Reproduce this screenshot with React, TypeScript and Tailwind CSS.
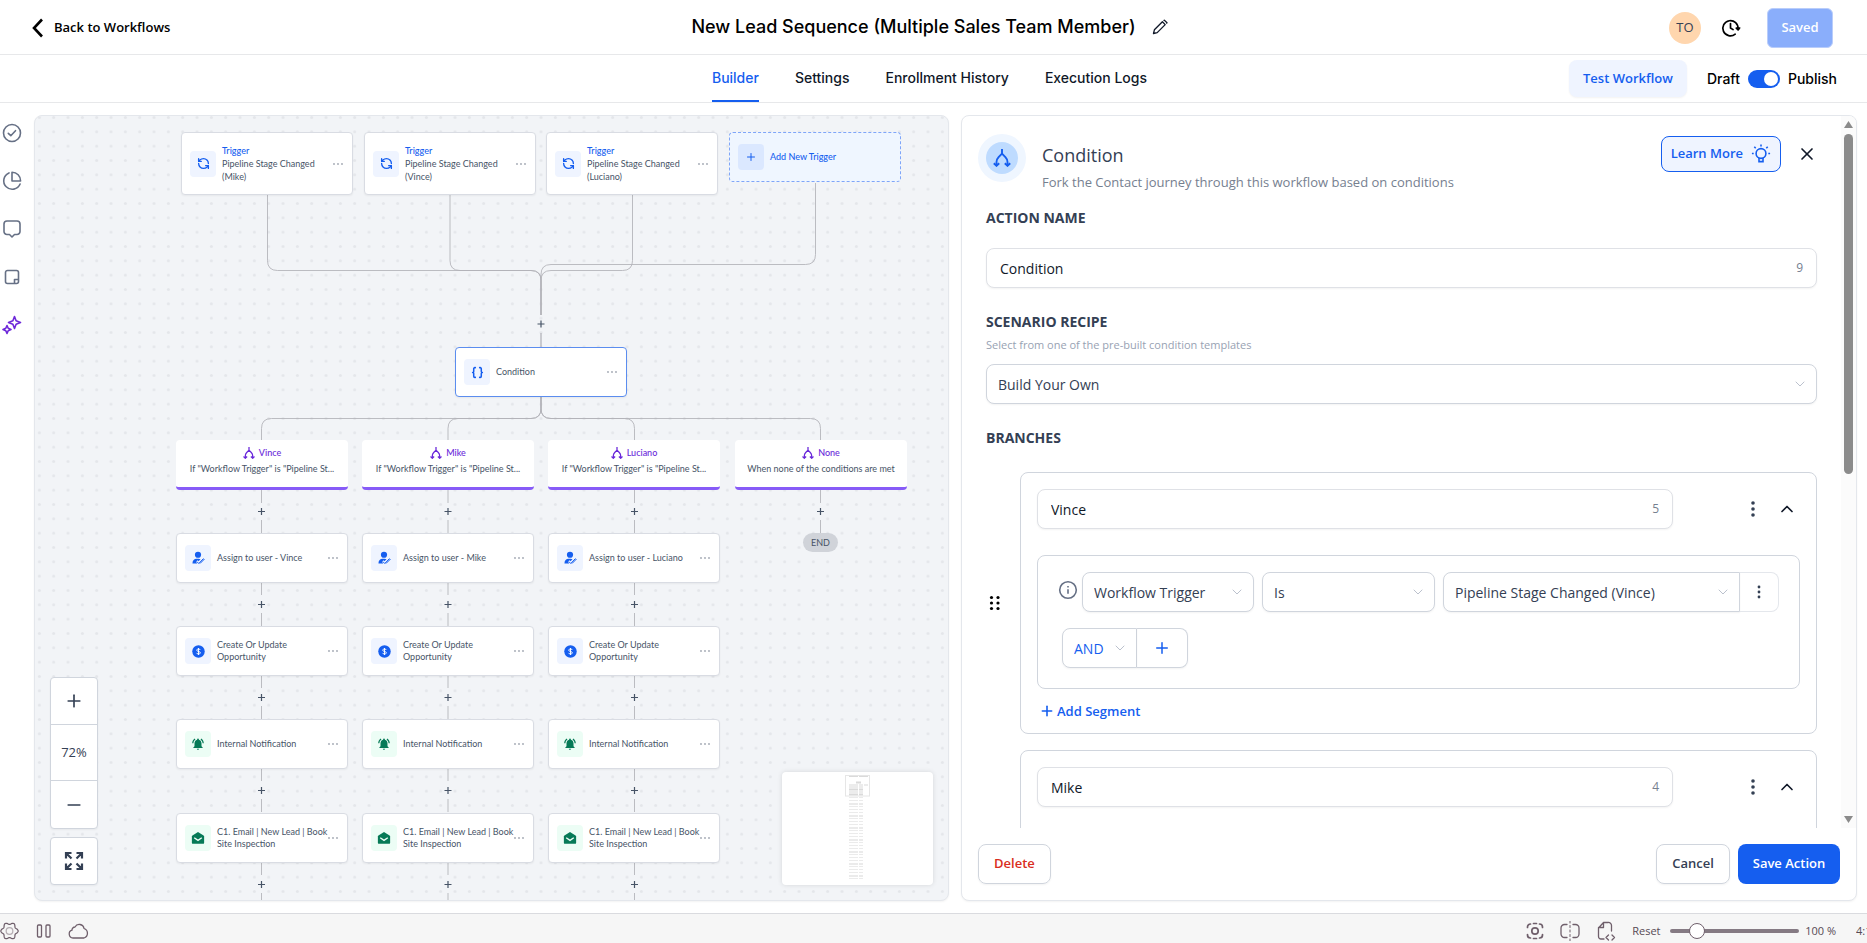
import { useState, type ReactNode } from "react";
import { Braces, ChevronDown, ChevronUp, Plus, Minus, RefreshCcw, X } from "lucide-react";
import { MdNotificationsActive } from "react-icons/md";

const UI = "font-['Open_Sans','Noto_Sans',sans-serif]";
const INTER = "font-['Inter','Open_Sans',sans-serif]";
const NODE = "font-['Lato','Open_Sans',sans-serif] text-[9px]";

/* ---------- icons ---------- */

function ForkIcon({ size, className = "" }: { size: number; className?: string }) {
  return (
    <svg width={size} height={size} viewBox="0 0 18 18" fill="none" stroke="currentColor" strokeWidth="1.9" className={className} aria-hidden="true">
      <path d="M9 0v5M9 4.6 5.6 8.2C4.1 9.8 3.5 11.2 3.5 13v4M9 4.6l3.4 3.6c1.5 1.6 2.1 3 2.1 4.8v4" />
      <path d="M.8 14.2l2.7 2.6 2.7-2.6M11.8 14.2l2.7 2.6 2.7-2.6" />
    </svg>
  );
}

function PencilIcon() {
  return (
    <svg width="16" height="16" viewBox="0 0 16 16" fill="none" stroke="currentColor" strokeWidth="1.3" strokeLinejoin="round" aria-hidden="true">
      <path d="M1.5 14.5l.9-3.700 8-8 2.8 2.8-8 8zM11.6 1.8l.7-.7 2.7 2.7-.7.7" />
    </svg>
  );
}

function HistoryIcon() {
  return (
    <svg width="20" height="20" viewBox="0 0 20 20" fill="none" stroke="currentColor" strokeWidth="1.7" strokeLinecap="round" strokeLinejoin="round" aria-hidden="true">
      <path d="M14.2 16.2A7.6 7.6 0 1 1 17 11" />
      <path d="M9.5 5.5V10l2.6 1.6" />
      <path d="M15.3 10.2l1.8 1.7 1.5-1.9z" fill="currentColor" />
    </svg>
  );
}

function BulbIcon() {
  return (
    <svg width="20" height="20" viewBox="0 0 20 20" fill="none" stroke="currentColor" strokeWidth="1.6" aria-hidden="true">
      <circle cx="10" cy="9.5" r="4.9" />
      <path d="M8 14v3.6h4V14" />
      <path d="M10 .6v1.9M.9 9.5h1.8M17.3 9.5h1.8M3.3 2.8l1.4 1.4M16.7 2.8l-1.4 1.4" />
    </svg>
  );
}

function AssignIcon() {
  return (
    <svg width="13" height="14" viewBox="0 0 26 28" fill="currentColor" className="text-[#155eef]" aria-hidden="true">
      <circle cx="12" cy="7.5" r="6.2" />
      <path d="M1 24c0-5 3.5-8.5 8-8.5h4c1.5 0 3 .4 4 1l-4 4-2-2-3 3 2.5 3.5H1z" />
      <path d="M9.5 21l4 4 9.5-10M16 25l9-9" fill="none" stroke="currentColor" strokeWidth="2" />
    </svg>
  );
}

function DollarIcon() {
  return (
    <svg width="13" height="13" viewBox="0 0 26 26" aria-hidden="true">
      <circle cx="13" cy="13" r="12.5" fill="#155eef" />
      <path d="M16.500 10C16.200 8.600 14.900 8 13 8c-2 0-3.500.9-3.500 2.500 0 3.600 7.200 1.500 7.200 5 0 1.600-1.600 2.500-3.700 2.500-2 0-3.500-.7-3.800-2.200M13 6v14" fill="none" stroke="#fff" strokeWidth="1.9" />
    </svg>
  );
}

function MailIcon() {
  return (
    <svg width="14" height="14" viewBox="0 0 24 24" fill="#067a57" aria-hidden="true">
      <path d="M12 1.5 21.5 7.5Q22.5 8.2 22.5 9.5V20a2 2 0 0 1-2 2h-17a2 2 0 0 1-2-2V9.5Q1.5 8.2 2.5 7.5z" />
      <path d="M5.5 11.5 12 16l6.5-4.5" fill="none" stroke="#ecfdf5" strokeWidth="2.4" />
    </svg>
  );
}

function ExpandIcon() {
  return (
    <svg width="20" height="20" viewBox="0 0 20 20" fill="none" stroke="currentColor" strokeWidth="2.2" aria-hidden="true">
      <path d="M2 7.5V2h5.5M2 2l5.5 5.5M12.5 2H18v5.5M18 2l-5.5 5.5M2 12.5V18h5.5M2 18l5.5-5.5M18 12.5V18h-5.5M18 18l-5.5-5.5" />
    </svg>
  );
}

function Dots({ vertical = false, size, gap, r, color }: { vertical?: boolean; size: number; gap: number; r: number; color: string }) {
  const mid = size / 2;
  return (
    <svg width={size} height={size} viewBox={`0 0 ${size} ${size}`} fill={color} aria-hidden="true">
      {[-1, 0, 1].map((i) => (
        <circle key={i} cx={vertical ? mid : mid + i * gap} cy={vertical ? mid + i * gap : mid} r={r} />
      ))}
    </svg>
  );
}

/* ---------- header ---------- */

function Header() {
  return (
    <header className="grid h-[55px] shrink-0 grid-cols-[1fr_auto_1fr] items-center border-b border-[#e7e8ea] pt-[2px] pr-[34px] pl-7">
      <a href="#workflows" className={`${UI} flex items-center gap-2 text-[13px] font-semibold text-black`}>
        <svg width="18" height="20" viewBox="0 0 18 20" fill="none" stroke="currentColor" strokeWidth="2.6" aria-hidden="true">
          <path d="M14 1.5 6 10l8 8.5" />
        </svg>
        Back to Workflows
      </a>
      <div className="flex items-center gap-4 pr-[2px] pb-[3px]">
        <h1 className={`${INTER} text-[18px] font-medium text-black`}>New Lead Sequence (Multiple Sales Team Member)</h1>
        <button aria-label="Rename workflow" className="text-[#101828]">
          <PencilIcon />
        </button>
      </div>
      <div className="flex items-center justify-end">
        <span className={`${UI} flex size-8 items-center justify-center rounded-full bg-[#ffd6ae] text-[13px] text-[#344054]`}>TO</span>
        <button aria-label="Version history" className="ml-5 text-black">
          <HistoryIcon />
        </button>
        <button disabled className={`${UI} ml-[26px] h-10 w-[66px] rounded-md border border-[#b9cdfb] bg-[#8aaefb] text-[13px] font-semibold text-white`}>
          Saved
        </button>
      </div>
    </header>
  );
}

const tabs = ["Builder", "Settings", "Enrollment History", "Execution Logs"];

function TabBar() {
  const [active, setActive] = useState(tabs[0]);
  const [published, setPublished] = useState(true);
  return (
    <div className={`${INTER} grid h-12 shrink-0 grid-cols-[1fr_auto_1fr] items-center border-b border-[#e7e8ea] pr-[30px] pl-6 text-[14px] font-medium`}>
      <span />
      <nav className="flex h-full gap-9 pr-[2px]">
        {tabs.map((t) => (
          <button
            key={t}
            onClick={() => setActive(t)}
            className={`h-full border-b-2 ${t === active ? "border-[#155eef] text-[#155eef]" : "border-transparent text-[#101828]"}`}
          >
            {t}
          </button>
        ))}
      </nav>
      <div className="flex items-center justify-end">
        <button className={`${UI} h-[37px] w-[118px] rounded-lg bg-[#eff4ff] text-[13px] font-semibold text-[#155eef] shadow-xs`}>Test Workflow</button>
        <label className="ml-5 flex items-center gap-2 text-black">
          Draft
          <input type="checkbox" role="switch" checked={published} onChange={() => setPublished(!published)} className="peer sr-only" />
          <span className={`flex h-[18px] w-8 items-center rounded-full px-[2px] ${published ? "justify-end bg-[#155eef]" : "justify-start bg-gray-300"}`}>
            <span className="size-[14px] rounded-full bg-white" />
          </span>
          Publish
        </label>
      </div>
    </div>
  );
}

/* ---------- left rail ---------- */

function Rail() {
  const base = { width: 20, height: 20, viewBox: "0 0 20 20", fill: "none", stroke: "currentColor", strokeWidth: 1.6, strokeLinecap: "round" as const, strokeLinejoin: "round" as const };
  const items: { label: string; color: string; icon: ReactNode }[] = [
    { label: "Checklist", color: "text-[#667085]", icon: <svg {...base}><circle cx="10" cy="10" r="8.5" /><path d="M6.3 10.3l2.5 2.4 4.7-5" /></svg> },
    { label: "Statistics", color: "text-[#667085]", icon: <svg {...base}><path d="M7 1.9A8.5 8.5 0 1 0 18.100 13" /><path d="M10 1.2V10h8.6A8.6 8.6 0 0 0 10 1.2z" /></svg> },
    { label: "Comments", color: "text-[#667085]", icon: <svg {...base}><path d="M5 2h10a3 3 0 0 1 3 3v7.5a3 3 0 0 1-3 3h-2.5L10 18l-2.5-2.5H5a3 3 0 0 1-3-3V5a3 3 0 0 1 3-3z" /></svg> },
    { label: "Notes", color: "text-[#667085]", icon: <svg {...base}><path d="M5.5 3.5h9a2 2 0 0 1 2 2v9a2 2 0 0 1-2 2h-9a2 2 0 0 1-2-2v-9a2 2 0 0 1 2-2zM12.5 16.3v-3.8h4" /></svg> },
    { label: "AI assistant", color: "text-[#6d28d9]", icon: <svg {...base}><path d="M12.5 1.5l1.6 4.3 4.4 1.7-4.4 1.7-1.6 4.3-1.6-4.3-4.4-1.7 4.4-1.7zM5 10.5l1.2 2.8L9 14.5l-2.8 1.2L5 18.5l-1.2-2.8L1 14.5l2.8-1.2z" /></svg> },
  ];
  return (
    <nav aria-label="Tools" className="flex w-[34px] shrink-0 flex-col gap-7 pt-2 pl-[2px]">
      {items.map((i) => (
        <button key={i.label} aria-label={i.label} className={`size-5 ${i.color}`}>
          {i.icon}
        </button>
      ))}
    </nav>
  );
}

/* ---------- canvas ---------- */

const stemX = 506;
const triggers = [
  { x: 146, name: "(Mike)" },
  { x: 329, name: "(Vince)" },
  { x: 511, name: "(Luciano)" },
];
const branches = [
  { x: 141, center: 226.5, name: "Vince", text: 'If "Workflow Trigger" is "Pipeline St...' },
  { x: 327, center: 413, name: "Mike", text: 'If "Workflow Trigger" is "Pipeline St...' },
  { x: 513, center: 599.5, name: "Luciano", text: 'If "Workflow Trigger" is "Pipeline St...' },
  { x: 700, center: 785.5, name: "None", text: "When none of the conditions are met" },
];
const rows = [417, 510, 603, 697];

function Connectors() {
  const feeds = [232.5, 415, 597.5];
  return (
    <svg className="pointer-events-none absolute inset-0 h-full w-full" aria-hidden="true">
      <defs>
        <pattern id="grid-dots" x="-2.8" y="-5.7" width="14.333" height="14.333" patternUnits="userSpaceOnUse">
          <circle cx="7.17" cy="7.17" r="1.5" fill="#e4e6ea" />
        </pattern>
      </defs>
      <rect width="100%" height="100%" fill="url(#grid-dots)" />
      <g fill="none" stroke="#b1b1b7" strokeWidth="1" strokeOpacity="0.85">
        {feeds.map((x) => {
          const d = x < stemX ? -10 : 10;
          return <path key={x} d={`M${x} 79V144.500Q${x} 154.500 ${x - d} 154.500H${stemX + d}Q${stemX} 154.500 ${stemX} 164.500V199`} />;
        })}
        <path d={`M780.500 67V138.500Q780.500 148.500 770.500 148.500H${stemX + 10}Q${stemX} 148.500 ${stemX} 158.500V199`} />
        <path d={`M${stemX} 217V231`} strokeWidth="1.5" />
        {branches.map(({ center: x }) => {
          const d = x < stemX ? -10 : 10;
          return <path key={x} d={`M${stemX} 281V292.500Q${stemX} 302.500 ${stemX + d} 302.500H${x - d}Q${x} 302.500 ${x} 312.500V324`} />;
        })}
        {branches.map(({ center: x, name }) => (
          <g key={name}>
            <path d={`M${x} 374V387M${x} 404V417`} />
            {name !== "None" && rows.map((y) => <path key={y} d={`M${x} ${y + 50}V${y + 62}M${x} ${y + 80}V${y + 93}`} />)}
          </g>
        ))}
      </g>
      <g stroke="#475467" strokeWidth="1.2">
        <path d={`M${stemX - 3.5} 208h7M${stemX} 204.500v7`} />
        {branches.map(({ center: x, name }) => (
          <g key={name}>
            <path d={`M${x - 3.5} 395.500h7M${x} 392v7`} />
            {name !== "None" && rows.map((y) => <path key={y} d={`M${x - 3.5} ${y + 71.5}h7M${x} ${y + 68}v7`} />)}
          </g>
        ))}
      </g>
    </svg>
  );
}

function NodeCard({ x, y, icon, green = false, selected = false, tall = false, children }: { x: number; y: number; icon: ReactNode; green?: boolean; selected?: boolean; tall?: boolean; children: ReactNode }) {
  return (
    <div
      style={{ left: x, top: y }}
      className={`absolute flex w-[172px] items-center rounded border bg-white pr-2 pl-2 ${NODE} text-[#475467] shadow-xs ${tall ? "h-[63px] leading-[13px]" : "h-[50px] leading-[12px]"} ${selected ? "border-[#5b8def]" : "border-[#d9dce3]"}`}
    >
      <span className={`flex size-[26px] shrink-0 items-center justify-center rounded ${green ? "bg-[#ecfdf5]" : "bg-[#eff4ff]"}`}>{icon}</span>
      <div className="ml-[6px] min-w-0 flex-1 whitespace-nowrap">{children}</div>
      <button aria-label="Node options" className="shrink-0">
        <Dots size={12} gap={4} r={0.9} color="#a0a6b1" />
      </button>
    </div>
  );
}

function Minimap() {
  return (
    <div className="absolute right-[15px] bottom-[15px] h-[113px] w-[151px] rounded bg-white shadow-[0_0_5px_rgba(0,0,0,0.12)]">
      <svg width="151" height="113" viewBox="0 0 151 113" role="img" aria-label="Minimap">
        <path d="M67 4h9v1h-9zM77 4h9v1h-9zM74 9.5h5v2h-5zM67 12.5h9v1h-9zM77 12.5h4v1h-4zM82 12.5h4v1h-4zM67 14.5h9v1h-9zM77 14.5h4v1h-4zM67 16.5h9v2h-9zM77 16.5h4v2h-4zM67 19.5h9v1h-9zM77 19.5h4v1h-4zM67 21.5h9v2h-9zM77 21.5h4v2h-4z" fill="#dadada" />
        {Array.from({ length: 28 }, (_, i) => {
          const y = 25 + i * 3;
          const h = i % 4 === 2 ? 2 : 1;
          return <path key={i} d={`M67 ${y}h9v${h}h-9zM77 ${y}h4v${h}h-4z`} fill="#ebebeb" />;
        })}
        <rect x="63.5" y="3.5" width="24" height="20.5" fill="none" stroke="#e6e6e6" />
      </svg>
    </div>
  );
}

function Canvas() {
  return (
    <section aria-label="Workflow canvas" className={`${UI} relative min-w-0 flex-[915] overflow-hidden rounded-lg border border-[#e4e7ec] bg-[#f2f4f7] shadow-xs`}>
      <Connectors />
      {triggers.map((t) => (
        <NodeCard key={t.x} x={t.x} y={16} tall icon={<RefreshCcw size={13} strokeWidth={2.5} className="text-[#155eef]" />}>
          <div className="font-medium text-[#155eef]">Trigger</div>
          <div>Pipeline Stage Changed</div>
          <div>{t.name}</div>
        </NodeCard>
      ))}
      <button style={{ left: 694, top: 16 }} className={`absolute flex h-[50px] w-[172px] items-center rounded border border-dashed border-[#7fa5f8] bg-[#eff6ff] pl-2 ${NODE} font-medium text-[#155eef]`}>
        <span className="flex size-[26px] items-center justify-center rounded bg-[#dbe8ff]">
          <Plus size={12} />
        </span>
        <span className="ml-[6px]">Add New Trigger</span>
      </button>
      <NodeCard x={420} y={231} selected icon={<Braces size={13} strokeWidth={2.8} className="text-[#155eef]" />}>
        Condition
      </NodeCard>
      {branches.map((b) => (
        <div key={b.name} style={{ left: b.x, top: 324 }} className={`absolute flex h-[50px] w-[172px] flex-col items-center rounded border-b-[3px] border-[#875bf7] bg-white pt-[6px] ${NODE} text-[#475467]`}>
          <div className="flex items-center gap-1 leading-[14px] font-medium text-[#6927da]">
            <ForkIcon size={12} />
            {b.name}
          </div>
          <div className="leading-[18px] whitespace-nowrap">{b.text}</div>
        </div>
      ))}
      {branches.slice(0, 3).map((b) => (
        <div key={b.name} className="contents">
          <NodeCard x={b.x} y={rows[0]} icon={<AssignIcon />}>Assign to user - {b.name}</NodeCard>
          <NodeCard x={b.x} y={rows[1]} icon={<DollarIcon />}>
            Create Or Update
            <br />
            Opportunity
          </NodeCard>
          <NodeCard x={b.x} y={rows[2]} green icon={<MdNotificationsActive size={14} className="text-[#067a57]" />}>Internal Notification</NodeCard>
          <NodeCard x={b.x} y={rows[3]} green icon={<MailIcon />}>
            C1. Email | New Lead | Book
            <br />
            Site Inspection
          </NodeCard>
        </div>
      ))}
      <span style={{ left: 768, top: 417 }} className={`absolute flex h-[19px] w-[35px] items-center justify-center rounded-full bg-[#d0d3d9] ${NODE} text-[#475467]`}>END</span>
      <div className="absolute bottom-[15px] left-[15px] flex w-12 flex-col gap-2 text-[#344054]">
        <div className="flex flex-col divide-y divide-[#d0d5dd] rounded border border-[#d0d5dd] bg-white shadow-xs">
          <button aria-label="Zoom in" className="flex h-[47px] items-center justify-center">
            <Plus size={20} />
          </button>
          <span className="flex h-14 items-center justify-center text-[13px]">72%</span>
          <button aria-label="Zoom out" className="flex h-[47px] items-center justify-center">
            <Minus size={20} />
          </button>
        </div>
        <button aria-label="Fit to screen" className="flex h-12 items-center justify-center rounded border border-[#d0d5dd] bg-white shadow-xs">
          <ExpandIcon />
        </button>
      </div>
      <Minimap />
    </section>
  );
}

/* ---------- side panel ---------- */

function SelectBox({ label, value, className = "", textClass = "text-[#344054]" }: { label: string; value: string; className?: string; textClass?: string }) {
  return (
    <div className={`grid h-10 items-center border border-[#d0d5dd] bg-white shadow-xs ${className}`}>
      <select aria-label={label} className={`col-start-1 row-start-1 h-full w-full appearance-none bg-transparent pr-8 pl-[11px] text-[14px] outline-none ${textClass}`}>
        <option>{value}</option>
      </select>
      <ChevronDown size={16} strokeWidth={1} className="pointer-events-none col-start-1 row-start-1 mr-2 justify-self-end text-[#98a2b3]" />
    </div>
  );
}

function CountedInput({ id, value, className = "" }: { id: string; value: string; className?: string }) {
  const [text, setText] = useState(value);
  return (
    <div className={`flex h-10 items-center rounded-lg border border-[#dfe1e6] bg-white px-[13px] shadow-xs ${className}`}>
      <input id={id} aria-label={id === "action-name" ? undefined : "Branch name"} value={text} onChange={(e) => setText(e.target.value)} className="min-w-0 flex-1 bg-transparent text-[14px] text-[#101828] outline-none" />
      <span className="text-[12px] text-[#76808f]">{text.length}</span>
    </div>
  );
}

const heading = "text-[14px] leading-5 font-bold text-[#344054]";

function Branch({ name, children }: { name: string; children: ReactNode }) {
  return (
    <div className="flex items-center">
      <button aria-label={`Reorder ${name}`} className="mr-[18px] flex w-4 justify-end">
        <svg width="14" height="16" viewBox="0 0 14 16" aria-hidden="true">
          {[2.5, 8, 13.5].map((y) => (
            <g key={y}>
              <circle cx="3.5" cy={y} r="1.6" />
              <circle cx="10" cy={y} r="1.6" />
            </g>
          ))}
        </svg>
      </button>
      <div className="min-w-0 flex-1 rounded-lg border border-[#d0d5dd] px-4 pt-4 pb-3">
        <div className="flex items-center">
          <CountedInput id={`branch-${name}`} value={name} className="flex-1" />
          <button aria-label="Branch options" className="ml-[70px]">
            <Dots vertical size={20} gap={6} r={1.8} color="#344054" />
          </button>
          <button aria-label="Collapse branch" className="mr-[3px] ml-[14px] text-[#101828]">
            <ChevronUp size={20} />
          </button>
        </div>
        {children}
      </div>
    </div>
  );
}

function Segment({ value }: { value: string }) {
  return (
    <>
      <div className="mt-[26px] rounded-lg border border-[#d0d5dd] pt-4 pr-5 pb-5 pl-5">
        <div className="flex">
          <svg width="20" height="20" viewBox="0 0 20 20" fill="none" stroke="#667085" strokeWidth="1.6" className="mt-2 mr-1 shrink-0" role="img" aria-label="Info">
            <circle cx="10" cy="10" r="8.3" />
            <path d="M10 9.2v4.6M10 6v1.6" />
          </svg>
          <SelectBox label="Field" value="Workflow Trigger" className="mr-2 w-[172px] rounded-lg" />
          <SelectBox label="Operator" value="Is" className="mr-2 w-[173px] rounded-lg" />
          <SelectBox label="Value" value={value} className="flex-1 rounded-l-lg" />
          <button aria-label="Condition options" className="flex h-10 w-[39px] items-center justify-center rounded-r-lg border border-l-0 border-[#e4e7ec]">
            <Dots vertical size={16} gap={5} r={1.4} color="#344054" />
          </button>
        </div>
        <div className="mt-4 ml-1 flex">
          <SelectBox label="Join" value="AND" className="w-[75px] rounded-l-lg" textClass="text-[#155eef]" />
          <button aria-label="Add condition" className="flex h-10 w-[51px] items-center justify-center rounded-r-lg border border-l-0 border-[#d0d5dd] text-[#155eef] shadow-xs">
            <Plus size={18} />
          </button>
        </div>
      </div>
      <button className="mt-3 ml-[2px] flex items-center gap-[2px] text-[13px] leading-5 font-semibold text-[#155eef]">
        <Plus size={16} strokeWidth={2.4} />
        Add Segment
      </button>
    </>
  );
}

function Panel() {
  return (
    <aside className={`${UI} flex min-w-0 flex-[896] flex-col overflow-hidden rounded-lg border border-[#e4e7ec] bg-white shadow-xs`}>
      <div className="flex min-h-0 flex-1">
        <div className="min-w-0 flex-1 overflow-hidden pr-6 pl-6">
          <div className="-ml-2 flex pt-[18px]">
            <span className="flex size-12 shrink-0 items-center justify-center rounded-full bg-[#eff6ff]">
              <span className="flex size-8 items-center justify-center rounded-full bg-[#bedbff] text-[#155eef]">
                <ForkIcon size={18} />
              </span>
            </span>
            <div className="ml-4 flex-1 pt-[7px]">
              <h2 className="text-[18px] leading-7 font-medium text-[#344054]">Condition</h2>
              <p className="text-[13px] leading-[26px] text-[#76808f]">Fork the Contact journey through this workflow based on conditions</p>
            </div>
            <button className="mt-[2px] flex h-9 items-center gap-2 rounded-lg border border-[#155eef] bg-[#eff4ff] px-[9px] text-[13px] font-semibold text-[#155eef]">
              Learn More
              <BulbIcon />
            </button>
            <button aria-label="Close" className="mt-3 mr-[2px] ml-[18px] flex size-4 shrink-0 items-center justify-center text-[#101828]">
              <X size={20} strokeWidth={2} className="shrink-0" />
            </button>
          </div>

          <label htmlFor="action-name" className={`mt-[13px] block ${heading}`}>ACTION NAME</label>
          <CountedInput id="action-name" value="Condition" className="mt-5" />

          <h3 className={`mt-6 ${heading}`}>SCENARIO RECIPE</h3>
          <p className="mt-[3px] text-[11px] leading-5 text-[#98a2b3]">Select from one of the pre-built condition templates</p>
          <SelectBox label="Scenario recipe" value="Build Your Own" className="mt-[9px] rounded-lg" />

          <h3 className={`mt-6 ${heading}`}>BRANCHES</h3>
          <div className="mt-6 flex flex-col gap-4">
            <Branch name="Vince">
              <Segment value="Pipeline Stage Changed (Vince)" />
            </Branch>
            <Branch name="Mike">
              <div className="mt-[26px] h-36 rounded-lg border border-[#d0d5dd]" />
            </Branch>
          </div>
        </div>
        <div aria-hidden="true" className="flex w-[15px] shrink-0 flex-col items-center justify-between bg-[#fbfbfb] py-[5px]">
          <div className="flex flex-col items-center gap-[6px]">
            <svg width="9" height="7" viewBox="0 0 9 7" fill="#8b8b8b"><path d="M4.5 0 9 7H0z" /></svg>
            <span className="h-[340px] w-[9px] rounded-full bg-[#8b8b8b]" />
          </div>
          <svg width="9" height="7" viewBox="0 0 9 7" fill="#8b8b8b"><path d="M4.5 7 9 0H0z" /></svg>
        </div>
      </div>
      <footer className="flex shrink-0 gap-2 px-4 py-4 text-[13px] font-semibold">
        <button className="mr-auto h-10 w-[73px] rounded-lg border border-[#d0d5dd] text-[#d92d20] shadow-xs">Delete</button>
        <button className="h-10 w-[74px] rounded-lg border border-[#d0d5dd] text-[#344054] shadow-xs">Cancel</button>
        <button className="h-10 w-[102px] rounded-lg bg-[#155eef] text-white">Save Action</button>
      </footer>
    </aside>
  );
}

/* ---------- browser status bar ---------- */

const gearPath =
  Array.from({ length: 72 }, (_, i) => {
    const a = (i * Math.PI) / 36;
    const r = 8 + 1.1 * Math.cos(6 * a);
    return `${i ? "L" : "M"}${(10 + r * Math.cos(a)).toFixed(2)} ${(10 + r * Math.sin(a)).toFixed(2)}`;
  }).join("") + "Z";

function StatusBar() {
  const [zoom, setZoom] = useState(100);
  const svg = { fill: "none", stroke: "#6f5f6b", strokeWidth: 1.3, strokeLinecap: "round" as const, strokeLinejoin: "round" as const };
  return (
    <div className={`${UI} flex h-[30px] shrink-0 items-center overflow-hidden border-t border-[#dadbdf] bg-[#f6f6f6] pt-[5px] text-[11px] whitespace-nowrap text-[#574a55]`}>
      <button aria-label="Settings">
        <svg width="19" height="20" viewBox="0 0 20 20" {...svg}><path d={gearPath} /><circle cx="10" cy="10" r="3.5" stroke="#b5adb3" /></svg>
      </button>
      <button aria-label="Panels" className="ml-[17px]">
        <svg width="16" height="20" viewBox="0 0 16 20" {...svg}><rect x="1.5" y="4" width="4" height="12" rx="1" /><rect x="10" y="4" width="4" height="12" rx="1" /></svg>
      </button>
      <button aria-label="Sync" className="ml-4">
        <svg width="21" height="20" viewBox="0 0 21 20" {...svg}><path d="M5 17a4 4 0 0 1-1-7.8 3 3 0 0 1 3-3.2 4.8 4.8 0 0 1 9 1.5 5 5 0 0 1 0 9.5z" /></svg>
      </button>
      <div className="flex-1" />
      <button aria-label="Capture page">
        <svg width="20" height="20" viewBox="0 0 20 20" {...svg} strokeWidth={1.7}><path d="M2.5 6.5V6a3 3 0 0 1 3-3M8.5 2.5h3M14.5 3a3 3 0 0 1 3 3v.5M2.5 13.5v.5a3 3 0 0 0 3 3M8.5 17.5h3M14.5 17a3 3 0 0 0 3-3v-.5" /><circle cx="10" cy="10" r="3.2" /></svg>
      </button>
      <button aria-label="Tile view" className="ml-[15px]">
        <svg width="20" height="20" viewBox="0 0 20 20" {...svg}><path d="M7 3.5H4.5a3.5 3.5 0 0 0-3.5 3.5v6a3.5 3.5 0 0 0 3.5 3.5H7M13 3.5h2.5A3.5 3.5 0 0 1 19 7v6a3.5 3.5 0 0 1-3.5 3.5H13" /><path d="M10 0v20" strokeDasharray="2 2.5" strokeWidth="1" /></svg>
      </button>
      <button aria-label="Page actions" className="ml-4">
        <svg width="20" height="20" viewBox="0 0 20 20" {...svg}><path d="M8 18H5a2.5 2.5 0 0 1-2.5-2.5V7l5-5.5H12A3 3 0 0 1 15.5 4.5V10M7.5 1.5v5h-5" /><path d="M12.5 14l-2.5 2.5L12.5 19M16 14l2.5 2.5L16 19" /></svg>
      </button>
      <button className="ml-4 w-[28px] text-left" onClick={() => setZoom(100)}>Reset</button>
      <input
        type="range"
        aria-label="Page zoom"
        min={20}
        max={500}
        value={zoom}
        onChange={(e) => setZoom(Number(e.target.value))}
        className="ml-[10px] h-4 w-[129px] appearance-none bg-transparent [&::-webkit-slider-runnable-track]:h-1 [&::-webkit-slider-runnable-track]:rounded-full [&::-webkit-slider-runnable-track]:bg-[#857a83] [&::-webkit-slider-thumb]:-mt-[6px] [&::-webkit-slider-thumb]:size-4 [&::-webkit-slider-thumb]:appearance-none [&::-webkit-slider-thumb]:rounded-full [&::-webkit-slider-thumb]:border [&::-webkit-slider-thumb]:border-[#6f5f6b] [&::-webkit-slider-thumb]:bg-white"
      />
      <span className="ml-[6px]">{zoom} %</span>
      <span className="ml-5 w-[11px] overflow-hidden">4:17</span>
    </div>
  );
}

export default function App() {
  return (
    <div className="flex h-screen flex-col overflow-hidden bg-white">
      <Header />
      <TabBar />
      <main className="flex min-h-0 flex-1 py-3 pr-[10px]">
        <Rail />
        <div className="flex min-w-0 flex-1 gap-3">
          <Canvas />
          <Panel />
        </div>
      </main>
      <StatusBar />
    </div>
  );
}
